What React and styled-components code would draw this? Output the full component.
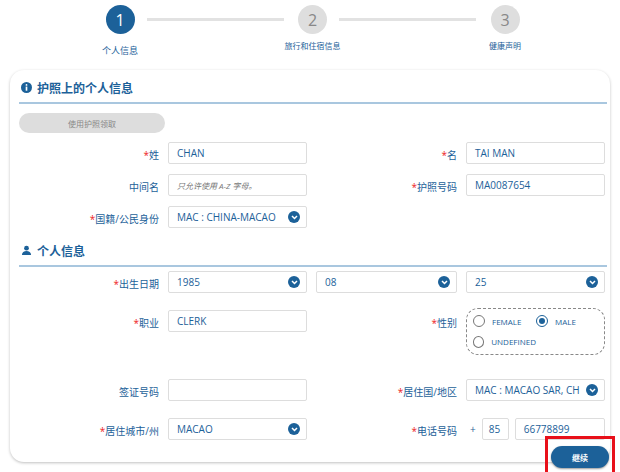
import React from "react";
import styled, { createGlobalStyle } from "styled-components";

const G = createGlobalStyle`
  body{margin:0;background:#fff;font-family:"Open Sans","Noto Sans CJK SC",sans-serif;color:#2a6496;}
  *{box-sizing:border-box;}
`;
const BLUE = "#1c6199";
const Page = styled.div`width:620px;height:472px;overflow:hidden;`;
const Stepper = styled.div`display:grid;grid-template-columns:192px 193px 192px;margin-left:24px;padding-top:5px;height:70px;`;
const Step = styled.div`position:relative;display:flex;flex-direction:column;align-items:center;`;
const Circle = styled.div`width:29px;height:29px;border-radius:50%;background:${p=>p.$a?BLUE:"#dedede"};color:${p=>p.$a?"#fff":"#888"};display:flex;align-items:center;justify-content:center;font-size:16px;z-index:1;`;
const Line = styled.div`position:absolute;top:13px;left:123px;width:137px;height:3px;background:#e2e2e2;`;
const StepLabel = styled.div`margin-top:${p=>p.$a?10:6}px;font-size:${p=>p.$a?9:8}px;color:${BLUE};`;
const Card = styled.div`margin:0 10px;height:392px;border-radius:14px;box-shadow:0 1px 3px rgba(0,0,0,.25);padding:8px 9px 0 9px;`;
const Title = styled.div`display:flex;align-items:center;gap:5px;font-weight:700;font-size:12px;color:${BLUE};height:19px;padding-left:2px;`;
const Rule = styled.div`height:2px;background:#a9c7df;margin:5px 0 9px 0;width:588px;`;
const GrayBtn = styled.div`width:146px;height:20px;border-radius:10px;background:#ddd;color:#888;font-size:8px;display:flex;align-items:center;justify-content:center;margin-bottom:9px;`;
const Grid = styled.div`display:grid;grid-template-columns:140px 139px 141px 139px;column-gap:9px;row-gap:${p=>p.$rg||10}px;align-items:start;`;
const Label = styled.div`text-align:right;font-size:10px;color:${BLUE};padding-top:5px;span{color:#e22;}`;
const Field = styled.div`height:22px;border:1px solid #ddd;border-radius:2px;display:flex;align-items:center;justify-content:space-between;padding:0 6px 0 8px;font-size:10px;color:${BLUE};font-style:${p=>p.$ph?"italic":"normal"};${p=>p.$ph?"color:#777;font-size:8px;":""}white-space:nowrap;overflow:hidden;`;
const Chev = styled.div`width:12px;height:12px;border-radius:50%;background:${BLUE};display:flex;align-items:center;justify-content:center;flex:none;`;
const Gender = styled.div`height:47px;border:1px dashed #888;border-radius:12px;display:grid;grid-template-columns:63px 1fr;padding:5px 6px;row-gap:6px;font-size:8px;color:${BLUE};margin:-2px 0 7px;`;
const Radio = styled.label`display:flex;align-items:center;gap:7px;`;
const Dot = styled.span`width:12px;height:12px;border-radius:50%;border:1.5px solid ${p=>p.$on?BLUE:"#777"};display:flex;align-items:center;justify-content:center;&::after{content:"";width:6px;height:6px;border-radius:50%;background:${p=>p.$on?BLUE:"transparent"};}`;
const Phone = styled.div`display:flex;align-items:center;gap:6px;font-size:10px;padding-left:4px;`;
const Footer = styled.div`display:flex;justify-content:flex-end;margin-top:-4px;width:590px;`;
const Hl = styled.div`border:3px solid #e8101a;padding:7px 3px 5px 3px;margin-right:-6px;`;
const Go = styled.div`width:58px;height:22px;border-radius:11px;background:${BLUE};color:#fff;font-size:8px;font-weight:700;display:flex;align-items:center;justify-content:center;box-shadow:0 1px 2px rgba(0,0,0,.4);`;

const C = () => <Chev><svg width="7" height="5" viewBox="0 0 7 5"><path d="M1 1l2.5 2.5L6 1" stroke="#fff" strokeWidth="1.5" fill="none"/></svg></Chev>;
const L = ({r,children}) => <Label>{r&&<span>*</span>}{children}</Label>;

export default function App(){
  return <Page><G/>
    <Stepper>
      <Step><Circle $a>1</Circle><Line/><StepLabel $a>个人信息</StepLabel></Step>
      <Step><Circle>2</Circle><Line/><StepLabel>旅行和住宿信息</StepLabel></Step>
      <Step><Circle>3</Circle><StepLabel>健康声明</StepLabel></Step>
    </Stepper>
    <Card>
      <Title><svg width="11" height="11" viewBox="0 0 12 12"><circle cx="6" cy="6" r="6" fill={BLUE}/><rect x="5.1" y="5" width="1.8" height="4.5" fill="#fff"/><circle cx="6" cy="3.2" r="1" fill="#fff"/></svg>护照上的个人信息</Title>
      <Rule/>
      <GrayBtn>使用护照领取</GrayBtn>
      <Grid>
        <L r>姓</L><Field>CHAN</Field><L r>名</L><Field>TAI MAN</Field>
        <L>中间名</L><Field $ph>只允许使用 A-Z 字母。</Field><L r>护照号码</L><Field>MA0087654</Field>
        <L r>国籍/公民身份</L><Field>MAC : CHINA-MACAO<C/></Field>
      </Grid>
      <Title style={{marginTop:13}}><svg width="11" height="11" viewBox="0 0 12 12"><circle cx="6" cy="3.5" r="2.6" fill={BLUE}/><path d="M1 11c0-3 2.3-4.5 5-4.5s5 1.5 5 4.5z" fill={BLUE}/></svg>个人信息</Title>
      <Rule style={{margin:"5px 0 4px"}}/>
      <Grid $rg={17}>
        <L r>出生日期</L><Field>1985<C/></Field><Field>08<C/></Field><Field>25<C/></Field>
        <L r>职业</L><Field>CLERK</Field><L r>性别</L>
        <Gender>
          <Radio><Dot/>FEMALE</Radio><Radio><Dot $on/>MALE</Radio>
          <Radio><Dot/>UNDEFINED</Radio>
        </Gender>
        <L>签证号码</L><Field/><L r>居住国/地区</L><Field>MAC : MACAO SAR, CH<C/></Field>
        <L r>居住城市/州</L><Field>MACAO<C/></Field><L r>电话号码</L>
        <Phone>+<Field style={{width:27,padding:"0 6px"}}>85</Field><Field style={{flex:1}}>66778899</Field></Phone>
      </Grid>
      <Footer><Hl><Go>继续</Go></Hl></Footer>
    </Card>
  </Page>;
}
